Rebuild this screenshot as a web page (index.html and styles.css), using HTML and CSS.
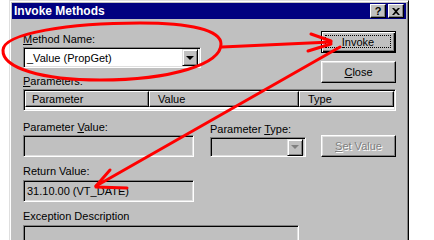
FILE: index.html
```html
<!DOCTYPE html>
<html lang="en">
<head>
  <meta charset="UTF-8" />
  <title>Invoke Methods</title>
  <link rel="stylesheet" href="styles.css">
</head>
<body>
  <div class="window">
    <div class="titlebar">
      <span class="title">Invoke Methods</span>
      <div class="title-btns">
        <span class="tbtn">?</span>
        <span class="tbtn">
          <svg width="8" height="7" viewBox="0 0 8 7"><path d="M0 0h2l2 2 2-2h2L5 3.5 8 7H6L4 5 2 7H0l3-3.5z" fill="#000"/></svg>
        </span>
      </div>
    </div>

    <div class="content">
      <!-- method name + buttons -->
      <div class="top-row">
        <div class="method">
          <div class="label"><u>M</u>ethod Name:</div>
          <div class="combo">
            <span class="combo-text">_Value (PropGet)</span>
            <span class="drop"><span class="arrow"></span></span>
          </div>
          <div class="label params-label"><u>P</u>arameters:</div>
        </div>
        <div class="btn-col">
          <div class="btn default"><span class="focus"><u>I</u>nvoke</span></div>
          <div class="btn"><u>C</u>lose</div>
        </div>
      </div>

      <div class="listview">
        <div class="lv-head">
          <span class="col c1">Parameter</span>
          <span class="col c2">Value</span>
          <span class="col c3">Type</span>
        </div>
      </div>

      <!-- parameter value / type -->
      <div class="mid-row">
        <div class="group w-value">
          <div class="label">Parameter <u>V</u>alue:</div>
          <div class="field"></div>
        </div>
        <div class="group w-type">
          <div class="label">Parameter <u>T</u>ype:</div>
          <div class="combo disabled">
            <span class="combo-text"></span>
            <span class="drop"><span class="arrow"></span></span>
          </div>
        </div>
        <div class="btn disabled-btn"><span><u>S</u>et Value</span></div>
      </div>

      <div class="group w-value ret">
        <div class="label">Return Value:</div>
        <div class="field">31.10.00 (VT_DATE)</div>
      </div>

      <div class="group w-exc">
        <div class="label">Exception Description</div>
        <div class="field tall"></div>
      </div>
    </div>
  </div>

  <!-- red hand drawn notes over the dialog -->
  <svg class="marks" width="434" height="240" viewBox="0 0 434 240">
    <g fill="none" stroke="#ff0000" stroke-width="3" stroke-linecap="round" stroke-linejoin="round">
      <path d="M3 50 C4 33 70 23 140 23 C190 23 221 30 221 44 C221 64 172 80 100 80 C42 80 2 68 3 50 Z"/>
      <path d="M222 47 L331 42"/>
      <path d="M311 34 L331 41"/>
      <path d="M308 51 L331 44"/>
      <path d="M340 47 L96 186"/>
      <path d="M110 170 L96 186"/>
      <path d="M96 187 L127 188"/>
    </g>
  </svg>
</body>
</html>
```

FILE: styles.css
```css
body {
  margin: 0;
  background: #fff;
  font-family: "Liberation Sans", Arial, sans-serif;
  font-size: 11px;
  color: #000;
  width: 434px;
  height: 240px;
  overflow: hidden;
  position: relative;
}

u {
  text-decoration: underline;
  text-underline-offset: 1px;
}

.window {
  margin-left: 9px;
  width: 400px;
  height: 270px;
  box-sizing: border-box;
  background: #c0c0c0;
  border: 1px solid;
  border-color: #dfdfdf #000 #000 #dfdfdf;
  box-shadow: inset 1px 1px #fff, inset -1px -1px #808080;
  padding: 2px 2px 2px 2px;
}

.titlebar {
  height: 16px;
  background: #000080;
  display: flex;
  align-items: center;
  justify-content: space-between;
  padding: 0 2px 0 2px;
}

.title {
  color: #fff;
  font-weight: bold;
  font-size: 12px;
}

.title-btns {
  display: flex;
  gap: 2px;
}

.tbtn {
  width: 16px;
  height: 14px;
  box-sizing: border-box;
  background: #c0c0c0;
  border: 1px solid;
  border-color: #fff #000 #000 #fff;
  box-shadow: inset -1px -1px #808080;
  display: flex;
  align-items: center;
  justify-content: center;
  font-weight: bold;
  font-size: 11px;
  line-height: 1;
}

.content {
  padding: 12px 10px 0 11px;
}

.label {
  line-height: 13px;
  height: 13px;
  white-space: nowrap;
}

/* top section */
.top-row {
  display: flex;
  justify-content: space-between;
  align-items: flex-start;
}

.method {
  width: 178px;
  padding-top: 2px;
}

.method .label {
  margin-bottom: 1px;
}

.method .params-label {
  margin-top: 7px;
  margin-bottom: 0;
}

.combo {
  height: 21px;
  box-sizing: border-box;
  background: #fff;
  border: 1px solid;
  border-color: #808080 #fff #fff #808080;
  box-shadow: inset 1px 1px #000, inset -1px -1px #dfdfdf;
  display: flex;
  align-items: center;
  padding: 2px;
}

.combo-text {
  flex: 1;
  padding-left: 1px;
}

.drop {
  width: 16px;
  height: 17px;
  box-sizing: border-box;
  background: #c0c0c0;
  border: 1px solid;
  border-color: #dfdfdf #000 #000 #dfdfdf;
  box-shadow: inset 1px 1px #fff, inset -1px -1px #808080;
  display: flex;
  align-items: center;
  justify-content: center;
}

.arrow {
  width: 0;
  height: 0;
  border-left: 4px solid transparent;
  border-right: 4px solid transparent;
  border-top: 4px solid #000;
}

.combo.disabled {
  background: #c0c0c0;
  height: 20px;
}

.combo.disabled .arrow {
  border-top-color: #808080;
}

.btn-col {
  display: flex;
  flex-direction: column;
  gap: 8px;
  width: 75px;
}

.btn {
  width: 75px;
  height: 22px;
  box-sizing: border-box;
  background: #c0c0c0;
  border: 1px solid;
  border-color: #fff #000 #000 #fff;
  box-shadow: inset -1px -1px #808080, inset 1px 1px #dfdfdf;
  display: flex;
  align-items: center;
  justify-content: center;
}

.btn.default {
  border: 1px solid #000;
  box-shadow: inset 1px 1px #fff, inset -1px -1px #000, inset -2px -2px #808080;
  padding: 3px 4px 4px 3px;
}

.focus {
  flex: 1;
  align-self: stretch;
  border: 1px dotted #000;
  display: flex;
  align-items: center;
  justify-content: center;
}

.disabled-btn span {
  color: #808080;
  text-shadow: 1px 1px #fff;
}

/* list view */
.listview {
  margin-top: 1px;
  height: 22px;
  box-sizing: border-box;
  border: 1px solid;
  border-color: #808080 #fff #fff #808080;
  box-shadow: inset 1px 1px #000, inset -1px -1px #dfdfdf;
  background: #fff;
  padding: 1px 1px 0 1px;
}

.lv-head {
  display: flex;
  height: 16px;
}

.col {
  box-sizing: border-box;
  background: #c0c0c0;
  border: 1px solid;
  border-color: #fff #000 #000 #fff;
  box-shadow: inset -1px -1px #808080;
  padding-left: 6px;
  line-height: 14px;
  white-space: nowrap;
}

.c1 { width: 124px; }
.c2 { width: 150px; padding-left: 8px; }
.c3 { flex: 1; padding-left: 8px; }

/* lower fields */
.mid-row {
  display: flex;
  align-items: flex-end;
  margin-top: 10px;
}

.group .label {
  margin-bottom: 1px;
}

.w-value { width: 171px; }
.w-type { width: 96px; margin-left: 16px; }
.w-exc { width: 276px; margin-top: 8px; }

.mid-row .btn {
  margin-left: auto;
}

.field {
  height: 22px;
  box-sizing: border-box;
  border: 1px solid;
  border-color: #808080 #fff #fff #808080;
  box-shadow: inset 1px 1px #000, inset -1px -1px #dfdfdf;
  background: #c0c0c0;
  padding: 0 3px;
  line-height: 20px;
  white-space: nowrap;
}

.ret {
  margin-top: 8px;
}

.ret .label {
  margin-bottom: 2px;
}

.w-exc .label {
  margin-bottom: 2px;
}

.field.tall {
  height: 40px;
}

.marks {
  position: absolute;
  left: 0;
  top: 0;
  pointer-events: none;
}
```
